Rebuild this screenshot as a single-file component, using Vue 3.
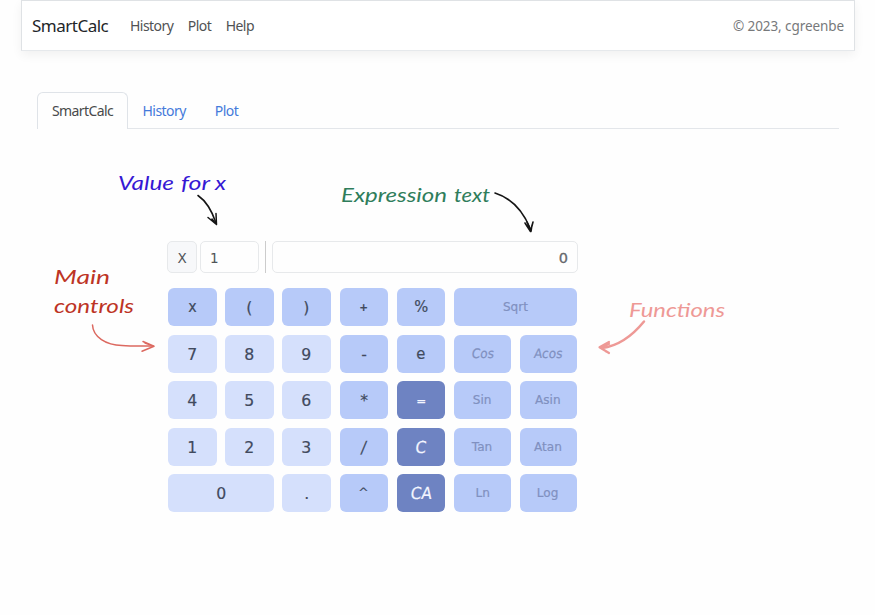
<script setup>
const menu = ['History', 'Plot', 'Help']
const keys = [
  ['x', 'op small'], ['(', 'op'], [')', 'op'], ['+', 'op tiny'], ['%', 'op mid'], ['Sqrt', 'fn wide'],
  ['7', 'num'], ['8', 'num'], ['9', 'num'], ['-', 'op'], ['e', 'op mid'], ['Cos', 'fn slant'], ['Acos', 'fn slant'],
  ['4', 'num'], ['5', 'num'], ['6', 'num'], ['*', 'op'], ['=', 'act equals'], ['Sin', 'fn'], ['Asin', 'fn'],
  ['1', 'num'], ['2', 'num'], ['3', 'num'], ['/', 'op slant'], ['C', 'act slant'], ['Tan', 'fn'], ['Atan', 'fn'],
  ['0', 'num wide'], ['.', 'num'], ['^', 'op caret'], ['CA', 'act slant'], ['Ln', 'fn'], ['Log', 'fn'],
]
const notes = [
  ['Value', 118, 190, 56, '#3518d4'],
  ['for', 181, 190, 29, '#3518d4'],
  ['x', 215, 190, 11, '#3518d4'],
  ['Expression', 341, 202, 106, '#2f7d5b'],
  ['text', 454, 202, 36, '#2f7d5b'],
  ['Main', 54, 284, 56, '#bd3425'],
  ['controls', 54, 313, 80, '#bd3425'],
  ['Functions', 629, 317, 96, '#ee9996'],
]
</script>

<template>
  <div class="page">
    <header class="navbar">
      <span class="brand">SmartCalc</span>
      <nav><a v-for="m in menu" :key="m">{{ m }}</a></nav>
      <span class="copy">© 2023, cgreenbe</span>
    </header>

    <div class="tabs">
      <a class="tab active">SmartCalc</a>
      <a class="tab second">History</a>
      <a class="tab">Plot</a>
    </div>

    <main class="calc">
      <div class="inputs">
        <div class="label">X</div>
        <div class="value">1</div>
        <div class="divider"></div>
        <div class="expr">0</div>
      </div>
      <div class="keys">
        <button v-for="k in keys" :key="k[0]" :class="k[1]"><span>{{ k[0] }}</span></button>
      </div>
    </main>

    <svg class="notes" width="875" height="615" viewBox="0 0 875 615">
      <g class="hand">
        <text
          v-for="n in notes"
          :key="n[0]"
          :x="n[1]"
          :y="n[2]"
          :textLength="n[3]"
          :fill="n[4]"
          lengthAdjust="spacingAndGlyphs"
        >{{ n[0] }}</text>
      </g>
      <g fill="none" stroke-linecap="round" stroke-linejoin="round">
        <g stroke="#151515">
          <path d="M198 195.500C206 201 212 211 216 223" stroke-width="1.600" />
          <path d="M208 217.500L216.500 224.500L216 213.500M212 219L216.500 224.500" stroke-width="1.500" />
          <path d="M495 193C511 198 523 211 530 228" stroke-width="1.600" />
          <path d="M525 223L530.500 231.500L533 222M527 222L531 231.500L532 225" stroke-width="1.600" />
        </g>
        <g stroke="#dc6960">
          <path d="M92.500 325C93 337 106 345 122 345.500C134 346.500 143 346 153 346" stroke-width="1.500" />
          <path d="M143 341.500L154 346.200L142 351.200M145 343L154 346.200" stroke-width="1.500" />
        </g>
        <g stroke="#ee9996">
          <path d="M644 321.500C633 335 618 346 602 348" stroke-width="2.500" />
          <path d="M609 342L599.500 347.200L609 353M609 344L601 347.500L606 351.500" stroke-width="2.200" />
        </g>
      </g>
    </svg>
  </div>
</template>

<style>
body { background: #fefefe; }
</style>

<style scoped>
* { box-sizing: border-box; }
.page {
  position: relative;
  width: 875px;
  height: 615px;
  overflow: hidden;
  font-family: "Noto Sans", "Open Sans", sans-serif;
  background: #fefefe;
}
.navbar {
  display: flex;
  align-items: center;
  height: 51px;
  margin: 0 20px 0 21px;
  padding: 0 10px;
  border: 1px solid #dfe2e5;
  border-bottom-color: #e6e9ec;
  box-shadow: 0 4px 10px rgba(0, 0, 0, 0.055);
  background: #fff;
}
.brand {
  width: 98px;
  font-size: 17px;
  letter-spacing: -0.500px;
  color: #222529;
}
nav {
  display: flex;
  gap: 14.500px;
  font-size: 14px;
  letter-spacing: -0.550px;
  color: #505254;
}
.copy {
  margin-left: auto;
  font-size: 13.5px;
  letter-spacing: -0.080px;
  color: #77797b;
}
.tabs {
  display: flex;
  height: 37px;
  margin: 41px 36px 0 37px;
  border-bottom: 1px solid #e3e6ea;
  font-size: 14px;
}
.tab {
  height: 37px;
  padding-top: 10px;
  padding-left: 29px;
  line-height: 18px;
  letter-spacing: -0.550px;
  color: #447adb;
}
.tab.second { padding-left: 14.5px; }
.tab.active {
  width: 91px;
  padding: 9px 0 0 14px;
  border: 1px solid #dfe3e8;
  border-bottom: 0;
  border-radius: 6px 6px 0 0;
  background: #fefefe;
  color: #484a4b;
  letter-spacing: -0.600px;
}
.calc {
  width: 411px;
  margin: 112px 0 0 167px;
  font-family: "DejaVu Sans", sans-serif;
}
.inputs {
  display: flex;
  height: 32px;
  font-size: 13.5px;
  color: #505458;
}
.inputs > div {
  border: 1px solid #e7e9eb;
  border-radius: 5px;
  line-height: 32px;
}
.inputs .label { width: 30px; text-align: center; background: #f7f8fa; }
.inputs .value { width: 59px; margin-left: 3px; padding-left: 9px; }
.inputs .divider { width: 1px; margin: 0 6px; border: 0; border-radius: 0; background: #ccc; }
.inputs .expr {
  flex: 1;
  padding-right: 9px;
  text-align: right;
  font-size: 14.5px;
  color: #66696c;
  -webkit-text-stroke: 0.300px #66696c;
}
.keys {
  display: grid;
  grid-template-columns: repeat(5, 48.600px) 57px 57px;
  grid-auto-rows: 38px;
  gap: 8.600px;
  width: max-content;
  margin: 15px 0 0 1px;
}
button {
  padding: 0;
  border: 0;
  border-radius: 6px;
  font-family: "DejaVu Sans", sans-serif;
  font-size: 16.5px;
  line-height: 39px;
  color: #414a5e;
}
button span {
  display: inline-block;
  transform: scaleX(0.950);
  -webkit-text-stroke: 0.200px currentColor;
}
.num { background: #d5e0fc; }
.op { background: #b7caf9; }
.act { background: #6e83c2; color: #f4f6ff; }
.fn { background: #b7caf9; color: #8090c0; font-size: 13px; line-height: 38px; }
.fn span { transform: scaleX(0.930); }
.wide { grid-column: span 2; }
.mid { font-size: 15.5px; }
.small { font-size: 15px; }
.tiny { font-size: 11px; font-weight: bold; }
.equals { font-size: 12.5px; }
.caret { font-size: 13px; line-height: 34px; }
.slant span { transform: scaleX(0.930) skewX(-8deg); }
.notes { position: absolute; left: 0; top: 0; pointer-events: none; }
.hand text { font-family: Lato, sans-serif; font-size: 19px; font-style: italic; font-weight: 400; }
</style>
